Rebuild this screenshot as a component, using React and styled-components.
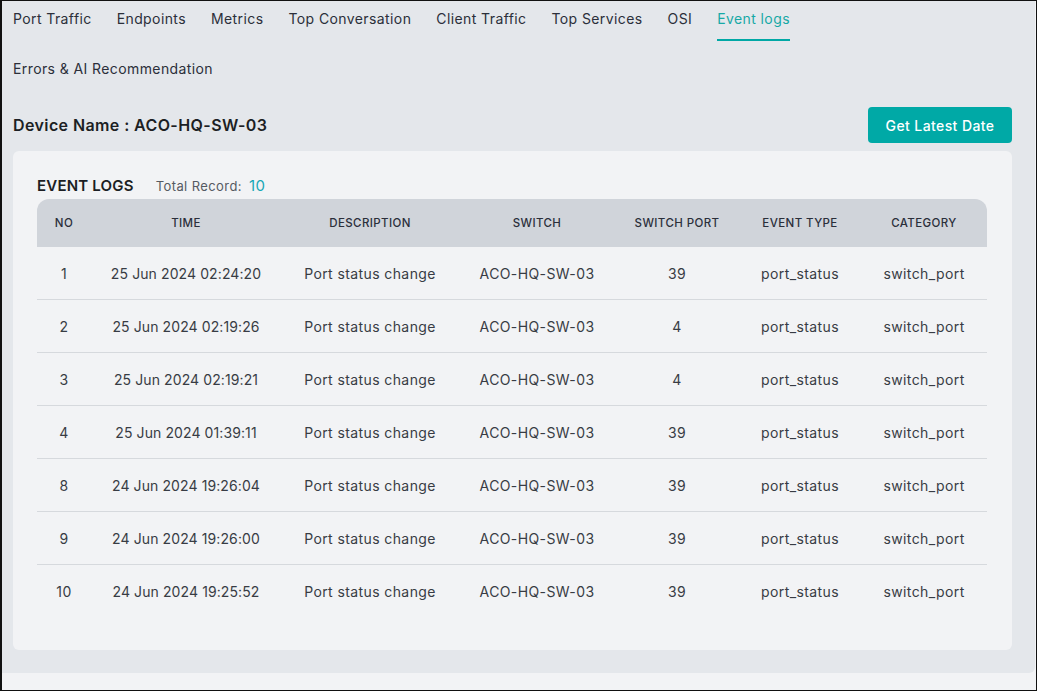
import React from 'react';
import styled, { createGlobalStyle } from 'styled-components';

const GlobalStyle = createGlobalStyle`
  * {
    box-sizing: border-box;
  }
  body {
    margin: 0;
    font-family: Inter, "Open Sans", Arial, sans-serif;
    letter-spacing: 0.4px;
    background: #f2f3f5;
    color: #2b2f33;
  }
`;

const Frame = styled.div`
  width: 1037px;
  height: 691px;
  border: 1px solid #111;
  border-left-width: 2px;
  background: #f2f3f5;
  padding-right: 1px;
  overflow: hidden;
`;

const Panel = styled.div`
  background: #e4e7eb;
  border-bottom-right-radius: 6px;
  padding: 0 23px 23px 11px;
`;

const TabBar = styled.nav`
  display: flex;
  flex-wrap: wrap;
  column-gap: 25px;
  row-gap: 10px;
  max-width: 960px;
`;

const Tab = styled.div`
  padding: 7px 0 10px;
  font-size: 14px;
  line-height: 21px;
  color: ${(p) => (p.$active ? '#17a9a6' : '#2b2f3a')};
  border-bottom: 2px solid ${(p) => (p.$active ? '#00a8a5' : 'transparent')};
  white-space: nowrap;
  cursor: pointer;
`;

const HeaderRow = styled.div`
  display: flex;
  align-items: center;
  justify-content: space-between;
  margin-top: 16px;
  height: 36px;
`;

const DeviceName = styled.h2`
  margin: 0;
  font-size: 16px;
  font-weight: 600;
  color: #1c1f24;
`;

const Button = styled.button`
  width: 144px;
  height: 36px;
  border: none;
  border-radius: 4px;
  background: #00a9a6;
  color: #fff;
  font-family: inherit;
  letter-spacing: inherit;
  font-size: 14px;
  font-weight: 500;
  cursor: pointer;
`;

const Card = styled.section`
  margin-top: 8px;
  background: #f2f3f5;
  border-radius: 6px;
  padding: 25px 24px 32px;
`;

const TitleRow = styled.div`
  display: flex;
  align-items: baseline;
  gap: 22px;
  height: 22px;
  margin-bottom: 1px;
`;

const Title = styled.h3`
  margin: 0;
  font-size: 15px;
  font-weight: 600;
  letter-spacing: 0.2px;
  color: #1c1f24;
`;

const Total = styled.span`
  font-size: 13px;
  color: #555a62;
  b {
    margin-left: 7px;
    font-size: 15px;
    font-weight: 400;
    color: #18a7b5;
  }
`;

const cols = '54px 190px 178px 156px 124px 122px 126px';

const Table = styled.div`
  width: 950px;
`;

const THead = styled.div`
  display: grid;
  grid-template-columns: ${cols};
  height: 48px;
  align-items: center;
  background: #d0d4da;
  border-radius: 12px 12px 0 0;
`;

const Th = styled.div`
  text-align: center;
  font-size: 11.5px;
  font-weight: 500;
  color: #2b2f3a;
  text-transform: uppercase;
`;

const Row = styled.div`
  display: grid;
  grid-template-columns: ${cols};
  height: 53px;
  align-items: center;
  border-bottom: 1px solid #d6d9dd;
  &:last-child {
    border-bottom: none;
  }
`;

const Td = styled.div`
  text-align: center;
  font-size: 14px;
  color: #383c44;
  white-space: nowrap;
  letter-spacing: ${(p) => (p.$numeric ? '0.1px' : '0.4px')};
`;

const tabs = [
  'Port Traffic',
  'Endpoints',
  'Metrics',
  'Top Conversation',
  'Client Traffic',
  'Top Services',
  'OSI',
  'Event logs',
  'Errors & AI Recommendation',
];

const headers = ['No', 'Time', 'Description', 'Switch', 'Switch Port', 'Event Type', 'Category'];

const rows = [
  { no: 1, time: '25 Jun 2024 02:24:20', port: 39 },
  { no: 2, time: '25 Jun 2024 02:19:26', port: 4 },
  { no: 3, time: '25 Jun 2024 02:19:21', port: 4 },
  { no: 4, time: '25 Jun 2024 01:39:11', port: 39 },
  { no: 8, time: '24 Jun 2024 19:26:04', port: 39 },
  { no: 9, time: '24 Jun 2024 19:26:00', port: 39 },
  { no: 10, time: '24 Jun 2024 19:25:52', port: 39 },
];

export default function App() {
  return (
    <>
      <GlobalStyle />
      <Frame>
        <Panel>
          <TabBar>
            {tabs.map((t) => (
              <Tab key={t} $active={t === 'Event logs'}>
                {t}
              </Tab>
            ))}
          </TabBar>
          <HeaderRow>
            <DeviceName>Device Name : ACO-HQ-SW-03</DeviceName>
            <Button>Get Latest Date</Button>
          </HeaderRow>
          <Card>
            <TitleRow>
              <Title>EVENT LOGS</Title>
              <Total>
                Total Record:<b>10</b>
              </Total>
            </TitleRow>
            <Table>
              <THead>
                {headers.map((h) => (
                  <Th key={h}>{h}</Th>
                ))}
              </THead>
              {rows.map((r) => (
                <Row key={r.no}>
                  <Td>{r.no}</Td>
                  <Td $numeric>{r.time}</Td>
                  <Td>Port status change</Td>
                  <Td>ACO-HQ-SW-03</Td>
                  <Td>{r.port}</Td>
                  <Td>port_status</Td>
                  <Td>switch_port</Td>
                </Row>
              ))}
            </Table>
          </Card>
        </Panel>
      </Frame>
    </>
  );
}
